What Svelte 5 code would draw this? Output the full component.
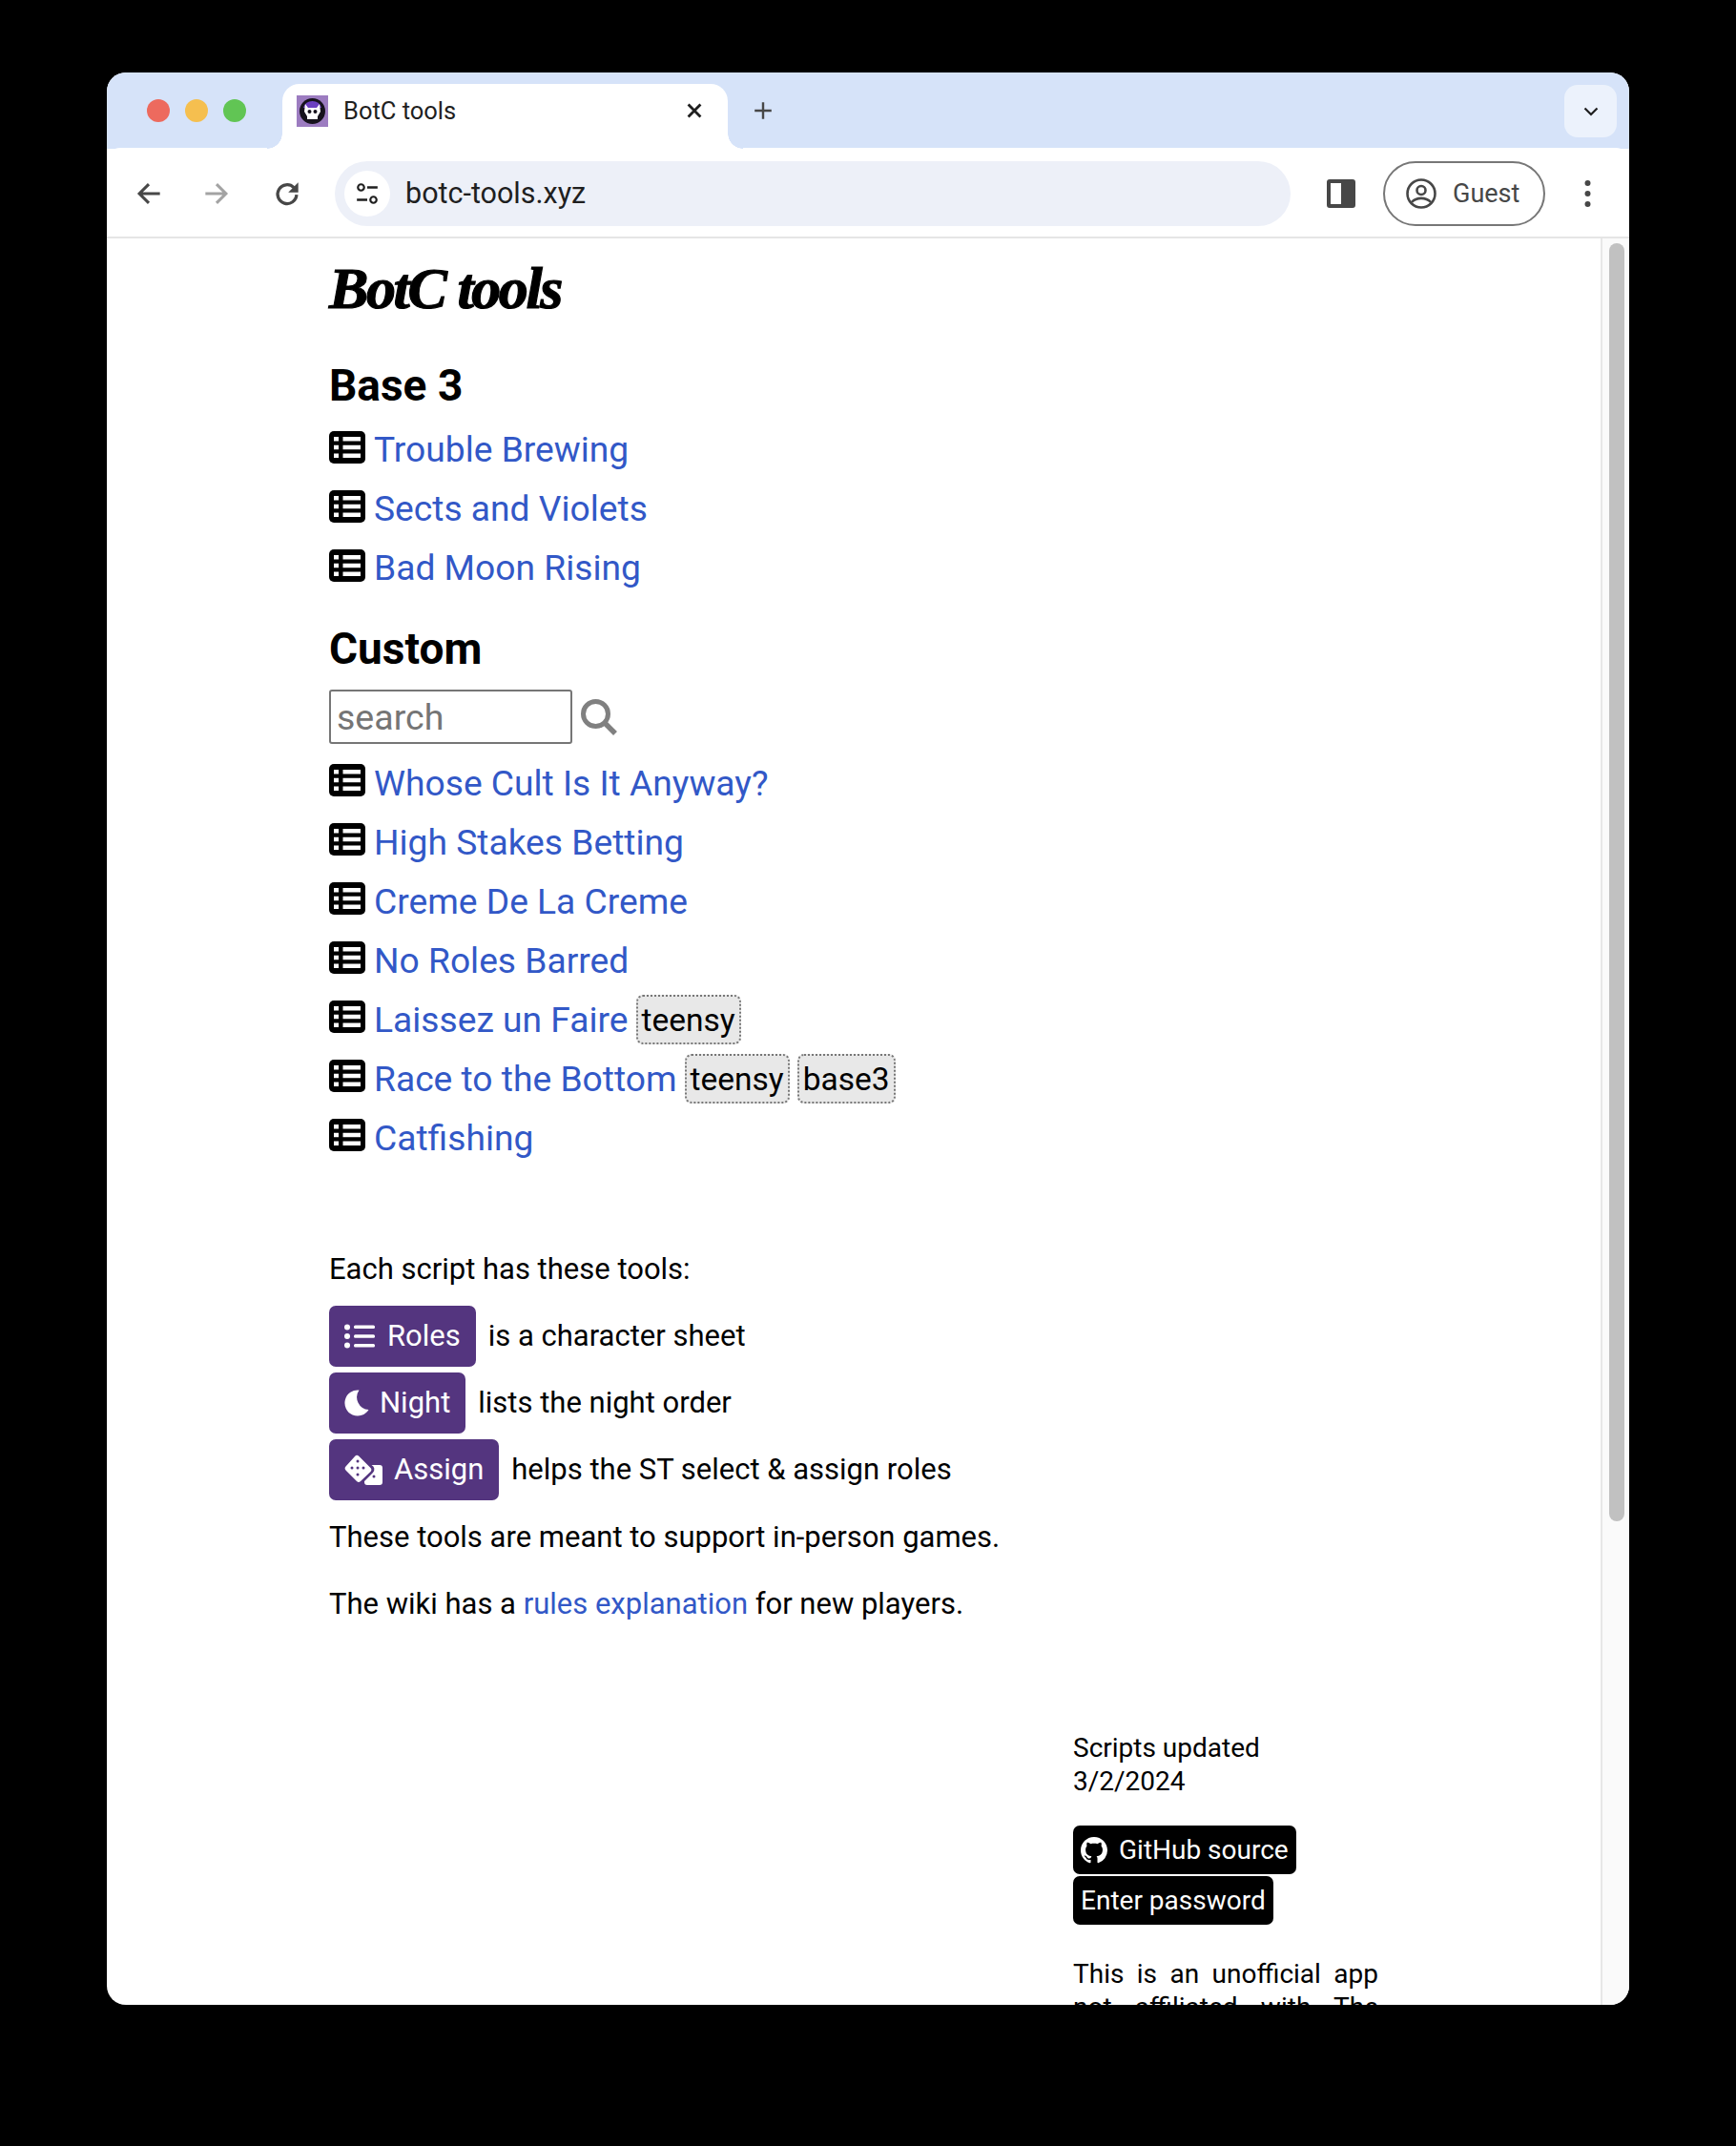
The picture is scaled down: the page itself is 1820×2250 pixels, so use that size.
<script>
    const baseScripts = [{ name: 'Trouble Brewing' }, { name: 'Sects and Violets' }, { name: 'Bad Moon Rising' }];
    const customScripts = [
        { name: 'Whose Cult Is It Anyway?' },
        { name: 'High Stakes Betting' },
        { name: 'Creme De La Creme' },
        { name: 'No Roles Barred' },
        { name: 'Laissez un Faire', tags: ['teensy'] },
        { name: 'Race to the Bottom', tags: ['teensy', 'base3'] },
        { name: 'Catfishing' }
    ];
</script>

{#snippet scriptRow(script)}
    <div class="script-row">
        <svg class="table-icon" viewBox="0 0 38 34">
            <rect width="38" height="34" rx="5" fill="#000" />
            <g fill="#fff">
                <rect x="5" y="6" width="5" height="4.500" /><rect x="14.500" y="6" width="18.500" height="4.500" />
                <rect x="5" y="14.750" width="5" height="4.500" /><rect x="14.500" y="14.750" width="18.500" height="4.500" />
                <rect x="5" y="23.500" width="5" height="4.500" /><rect x="14.500" y="23.500" width="18.500" height="4.500" />
            </g>
        </svg>
        <a href="#top">{script.name}</a>
        {#each script.tags ?? [] as tag}
            <span class="tag">{tag}</span>
        {/each}
    </div>
{/snippet}

<div class="window">
    <div class="tabstrip">
        <div class="lights">
            <span class="light red"></span>
            <span class="light yellow"></span>
            <span class="light green"></span>
        </div>
        <div class="tab">
            <svg class="favicon" viewBox="0 0 33 33">
                <rect width="33" height="33" fill="#9c7cc0" />
                <circle cx="16.500" cy="16.500" r="13.500" fill="#16121c" />
                <path d="M7 13a10 10 0 0 1 19 0z" fill="#6b3fc0" />
                <path d="M9 9l3 4h9l3-4 1 8-3 5v3H11v-3l-3-5z" fill="#fff" />
                <circle cx="13.500" cy="17" r="2" fill="#16121c" /><circle cx="19.500" cy="17" r="2" fill="#16121c" />
            </svg>
            <span class="tab-title">BotC tools</span>
            <svg class="tab-close" viewBox="0 0 14 14"><path d="M2 2l10 10M12 2L2 12" stroke="#1f1f1f" stroke-width="2.200" /></svg>
        </div>
        <svg class="new-tab" viewBox="0 0 20 20"><path d="M10 2v16M2 10h16" stroke="#474747" stroke-width="2.200" /></svg>
        <div class="tab-search">
            <svg viewBox="0 0 16 10" width="16" height="10"><path d="M1.500 1.500L8 8l6.500-6.500" fill="none" stroke="#1f1f1f" stroke-width="2.200" /></svg>
        </div>
    </div>

    <div class="toolbar">
        <svg class="nav-icon" viewBox="0 0 24 24"><path d="M22 12H4M12 3.500L3.500 12l8.500 8.500" fill="none" stroke="#474747" stroke-width="2.600" /></svg>
        <svg class="nav-icon" viewBox="0 0 24 24"><path d="M2 12h18M12 3.500l8.500 8.500-8.500 8.500" fill="none" stroke="#a3a3a3" stroke-width="2.600" /></svg>
        <svg class="nav-icon" viewBox="0 0 24 24">
            <path d="M20.500 13a8.500 8.500 0 1 1-2.500-6.500L20.500 9" fill="none" stroke="#474747" stroke-width="2.800" />
            <path d="M22 2V11H13z" fill="#474747" />
        </svg>
        <div class="omnibox">
            <div class="site-info">
                <svg viewBox="0 0 24 24" width="26" height="26">
                    <circle cx="6" cy="6" r="3" fill="none" stroke="#1f1f1f" stroke-width="2" /><path d="M12 6h10M2 18h10" stroke="#1f1f1f" stroke-width="2.400" />
                    <circle cx="18" cy="18" r="3" fill="none" stroke="#1f1f1f" stroke-width="2" />
                </svg>
            </div>
            <span class="url">botc-tools.xyz</span>
        </div>
        <div class="panel-icon"></div>
        <div class="guest">
            <svg viewBox="0 0 32 32" width="32" height="32">
                <circle cx="16" cy="16" r="14.500" fill="none" stroke="#474747" stroke-width="2.600" />
                <circle cx="16" cy="12.500" r="4.500" fill="none" stroke="#474747" stroke-width="2.600" />
                <path d="M6 25c5-5.500 15-5.500 20 0" fill="none" stroke="#474747" stroke-width="2.600" />
            </svg>
            <span>Guest</span>
        </div>
        <svg class="dots" viewBox="0 0 6 28"><circle cx="3" cy="3" r="3" /><circle cx="3" cy="14" r="3" /><circle cx="3" cy="25" r="3" /></svg>
    </div>

    <div class="viewport">
        <main>
            <h1>BotC tools</h1>

            <h2>Base 3</h2>
            <div class="scripts">
                {#each baseScripts as script}
                    {@render scriptRow(script)}
                {/each}
            </div>

            <h2 class="custom-title">Custom</h2>
            <div class="search">
                <input type="text" placeholder="search" />
                <svg viewBox="0 0 38 38" width="38" height="38">
                    <circle cx="15.500" cy="15.500" r="13" fill="none" stroke="#808080" stroke-width="5" />
                    <path d="M25 25l11 11" stroke="#808080" stroke-width="5.500" />
                </svg>
            </div>
            <div class="scripts">
                {#each customScripts as script}
                    {@render scriptRow(script)}
                {/each}
            </div>

            <section class="help">
                <p>Each script has these tools:</p>
                <div class="tool-row">
                    <span class="tool roles">
                        <svg viewBox="0 0 32 26" width="32" height="26" fill="#fff">
                            <circle cx="3" cy="3.500" r="3" /><circle cx="3" cy="13" r="3" /><circle cx="3" cy="22.500" r="3" />
                            <rect x="10" y="1.500" width="22" height="3.500" rx="1.500" /><rect x="10" y="11.200" width="22" height="3.500" rx="1.500" /><rect x="10" y="21" width="22" height="3.500" rx="1.500" />
                        </svg>
                        Roles
                    </span>
                    <span>is a character sheet</span>
                </div>
                <div class="tool-row">
                    <span class="tool night">
                        <svg viewBox="0 0 26 28" width="26" height="28"><path d="M15.500 .6A13.500 13.500 0 1 0 25.500 21 13 13 0 0 1 15.500 .6z" fill="#fff" /></svg>
                        Night
                    </span>
                    <span>lists the night order</span>
                </div>
                <div class="tool-row">
                    <span class="tool assign">
                        <svg viewBox="0 0 40 32" width="40" height="32">
                            <path d="M15 1.500L27.500 14a3 3 0 0 1 0 4L17 28a3 3 0 0 1-4 0L1.500 16.500a3 3 0 0 1 0-4L11 2a3 3 0 0 1 4-.5z" fill="#fff" />
                            <path d="M28.500 11H37a3 3 0 0 1 3 3v15a3 3 0 0 1-3 3H24a3 3 0 0 1-3-3v-1l9-9a5 5 0 0 0-1.500-8z" fill="#fff" />
                            <g fill="#54357f"><circle cx="14" cy="7" r="1.500" /><circle cx="8" cy="14" r="1.500" /><circle cx="14" cy="14" r="1.500" /><circle cx="20" cy="14" r="1.500" /><circle cx="14" cy="21" r="1.500" /><circle cx="31" cy="23" r="1.500" /></g>
                        </svg>
                        Assign
                    </span>
                    <span>helps the ST select &amp; assign roles</span>
                </div>
                <p class="after-tools">These tools are meant to support in-person games.</p>
                <p class="wiki">The wiki has a <a href="#top">rules explanation</a> for new players.</p>
            </section>

            <aside class="about">
                <p class="updated">Scripts updated<br />3/2/2024</p>
                <div class="about-links">
                    <span class="pill">
                        <svg viewBox="0 0 16 16" width="28" height="28"><path fill="#fff" d="M8 0C3.580 0 0 3.580 0 8c0 3.540 2.290 6.530 5.470 7.590.4.070.55-.17.55-.38 0-.19-.01-.82-.01-1.490-2.010.37-2.530-.49-2.690-.94-.09-.23-.48-.94-.82-1.130-.28-.15-.68-.52-.01-.53.63-.01 1.080.58 1.230.82.72 1.210 1.870.87 2.330.66.07-.52.28-.87.51-1.070-1.780-.2-3.640-.89-3.640-3.950 0-.87.31-1.590.82-2.150-.08-.2-.36-1.020.08-2.120 0 0 .67-.21 2.200.82.64-.18 1.320-.27 2-.27.68 0 1.360.09 2 .27 1.530-1.040 2.200-.82 2.200-.82.44 1.100.16 1.920.08 2.120.51.56.82 1.270.82 2.150 0 3.070-1.870 3.750-3.650 3.950.29.25.54.73.54 1.480 0 1.070-.01 1.930-.01 2.200 0 .21.15.46.55.38A8.013 8.013 0 0016 8c0-4.420-3.580-8-8-8z" /></svg>
                        GitHub source
                    </span>
                    <span class="pill">Enter password</span>
                </div>
                <p class="disclaimer">This is an unofficial app not affiliated with The Pandemonium Institute.</p>
            </aside>
        </main>
        <div class="scrollbar"><div class="thumb"></div></div>
    </div>
</div>

<style>
    :global(body) {
        background: #000;
    }

    .window {
        box-sizing: border-box;
        width: 1596px;
        height: 2026px;
        margin: 76px 0 0 112px;
        border-radius: 20px;
        overflow: hidden;
        background: #fff;
        display: flex;
        flex-direction: column;
        font-family: Roboto, sans-serif;
    }

    .tabstrip {
        flex: none;
        height: 80px;
        background: #d6e3f9;
        display: flex;
        align-items: flex-end;
    }

    .lights {
        display: flex;
        gap: 16px;
        align-self: flex-start;
        margin: 28px 0 0 42px;
    }

    .light {
        width: 24px;
        height: 24px;
        border-radius: 50%;
    }

    .red { background: #ed6a5e; }
    .yellow { background: #f5bf4f; }
    .green { background: #61c554; }

    .tab {
        position: relative;
        box-sizing: border-box;
        width: 467px;
        height: 68px;
        margin-left: 38px;
        padding: 0 24px 12px 15px;
        background: #fff;
        border-radius: 18px 18px 0 0;
        display: flex;
        align-items: center;
    }

    /* flared feet where the tab meets the toolbar */
    .tab::before,
    .tab::after {
        content: '';
        position: absolute;
        bottom: 0;
        width: 16px;
        height: 16px;
    }

    .tab::before {
        left: -16px;
        background: radial-gradient(circle at 0 0, #d6e3f9 15.500px, #fff 16px);
    }

    .tab::after {
        right: -16px;
        background: radial-gradient(circle at 100% 0, #d6e3f9 15.500px, #fff 16px);
    }

    .favicon {
        width: 33px;
        height: 33px;
        flex: none;
    }

    .tab-title {
        margin-left: 16px;
        font-size: 25.500px;
        color: #1f1f1f;
        flex: 1;
    }

    .tab-close {
        width: 18px;
        height: 18px;
        margin-right: 2px;
    }

    .new-tab {
        width: 22px;
        height: 22px;
        margin: 0 0 29px 26px;
    }

    .tab-search {
        margin-left: auto;
        margin-right: 13px;
        align-self: flex-start;
        margin-top: 13px;
        width: 55px;
        height: 55px;
        border-radius: 14px;
        background: #ecf2fc;
        display: flex;
        align-items: center;
        justify-content: center;
    }

    .toolbar {
        flex: none;
        box-sizing: border-box;
        height: 95px;
        background: #fff;
        border-bottom: 2px solid #e5e5e5;
        border-radius: 14px 14px 0 0;
        margin-top: -1px;
        display: flex;
        align-items: center;
        padding: 2px 0 0 30px;
    }

    .nav-icon {
        width: 28px;
        height: 28px;
        margin-right: 46px;
        flex: none;
    }

    .nav-icon:first-of-type {
        margin-right: 43px;
    }

    .nav-icon:nth-of-type(3) {
        margin-right: 36px;
    }

    .omnibox {
        box-sizing: border-box;
        width: 1002px;
        height: 68px;
        border-radius: 34px;
        background: #edf0f8;
        display: flex;
        align-items: center;
        padding-left: 10px;
    }

    .site-info {
        width: 48px;
        height: 48px;
        border-radius: 50%;
        background: #fff;
        display: flex;
        align-items: center;
        justify-content: center;
    }

    .url {
        margin-left: 16px;
        font-size: 30.500px;
        color: #1f1f1f;
    }

    .panel-icon {
        box-sizing: border-box;
        width: 30px;
        height: 30px;
        margin-left: 38px;
        border: 4px solid #474747;
        border-right-width: 15px;
        border-radius: 3px;
        background: #fff;
    }

    .guest {
        box-sizing: border-box;
        width: 170px;
        height: 68px;
        margin-left: 29px;
        border: 2px solid #777;
        border-radius: 34px;
        display: flex;
        align-items: center;
        padding-left: 22px;
        gap: 17px;
        font-size: 27px;
        color: #474747;
    }

    .dots {
        width: 7px;
        height: 28px;
        margin-left: 41px;
        fill: #474747;
    }

    .viewport {
        flex: 1;
        min-height: 0;
        display: flex;
        overflow: hidden;
    }

    main {
        flex: 1;
        min-width: 0;
        padding-left: 233px;
        color: #000;
    }

    h1 {
        margin: 17px 0 0;
        font-family: "Liberation Serif", serif;
        font-size: 62px;
        line-height: 70px;
        font-style: italic;
        font-weight: 700;
        letter-spacing: -2.400px;
        -webkit-text-stroke: 1.200px #000;
    }

    h2 {
        margin: 36px 0 5px;
        font-size: 46px;
        line-height: 62px;
        font-weight: 700;
    }

    h2.custom-title {
        margin-top: 23px;
    }

    .scripts {
        display: flex;
        flex-direction: column;
    }

    .script-row {
        height: 62px;
        display: flex;
        align-items: center;
        font-size: 37.200px;
    }

    .table-icon {
        width: 38px;
        height: 34px;
        margin: 0 9px 5px 0;
        flex: none;
    }

    a {
        color: #3258c7;
        text-decoration: none;
    }

    .tag {
        box-sizing: border-box;
        height: 52px;
        margin-left: 8px;
        padding: 0 4px;
        border: 2px dotted #777;
        border-radius: 7px;
        background: #e8e8e8;
        font-size: 33.500px;
        line-height: 50px;
    }

    .search {
        display: flex;
        align-items: center;
        gap: 9px;
        margin: 12px 0 9.500px;
    }

    input {
        box-sizing: border-box;
        width: 255px;
        height: 57px;
        padding: 0 6px;
        border: 2px solid #767676;
        border-radius: 3px;
        font-family: inherit;
        font-size: 37.500px;
    }

    input::placeholder {
        color: #757575;
    }

    .help {
        margin-top: 88px;
        font-size: 31px;
    }

    p {
        margin: 0;
    }

    .tool-row {
        display: flex;
        align-items: center;
        gap: 13px;
        margin-top: 6px;
    }

    .help > p:first-child {
        margin-bottom: 20px;
    }

    .tool {
        box-sizing: border-box;
        height: 64px;
        padding: 0 16px;
        border-radius: 7px;
        background: #54357f;
        color: #fff;
        display: flex;
        align-items: center;
    }

    .roles svg { margin-right: 13px; }
    .night svg { margin-right: 11px; }
    .assign svg { margin-right: 12px; }

    .after-tools {
        margin-top: 20px;
    }

    .wiki {
        margin-top: 33px;
    }

    .about {
        width: 320px;
        margin: 115px 0 0 780px;
        font-size: 28px;
        line-height: 35px;
    }

    .about-links {
        display: flex;
        flex-direction: column;
        align-items: flex-start;
        gap: 2px;
        margin-top: 29.500px;
    }

    .pill {
        box-sizing: border-box;
        height: 51px;
        padding: 0 8px;
        border-radius: 7px;
        background: #000;
        color: #fff;
        display: flex;
        align-items: center;
        gap: 12px;
    }

    .disclaimer {
        margin-top: 34px;
        text-align: justify;
    }

    .scrollbar {
        flex: none;
        box-sizing: border-box;
        width: 30px;
        padding: 5px 5px 0 7px;
        border-left: 2px solid #e7e7e7;
        background: #fafafa;
    }

    .thumb {
        height: 1340px;
        border-radius: 8px;
        background: #c1c1c1;
    }
</style>
